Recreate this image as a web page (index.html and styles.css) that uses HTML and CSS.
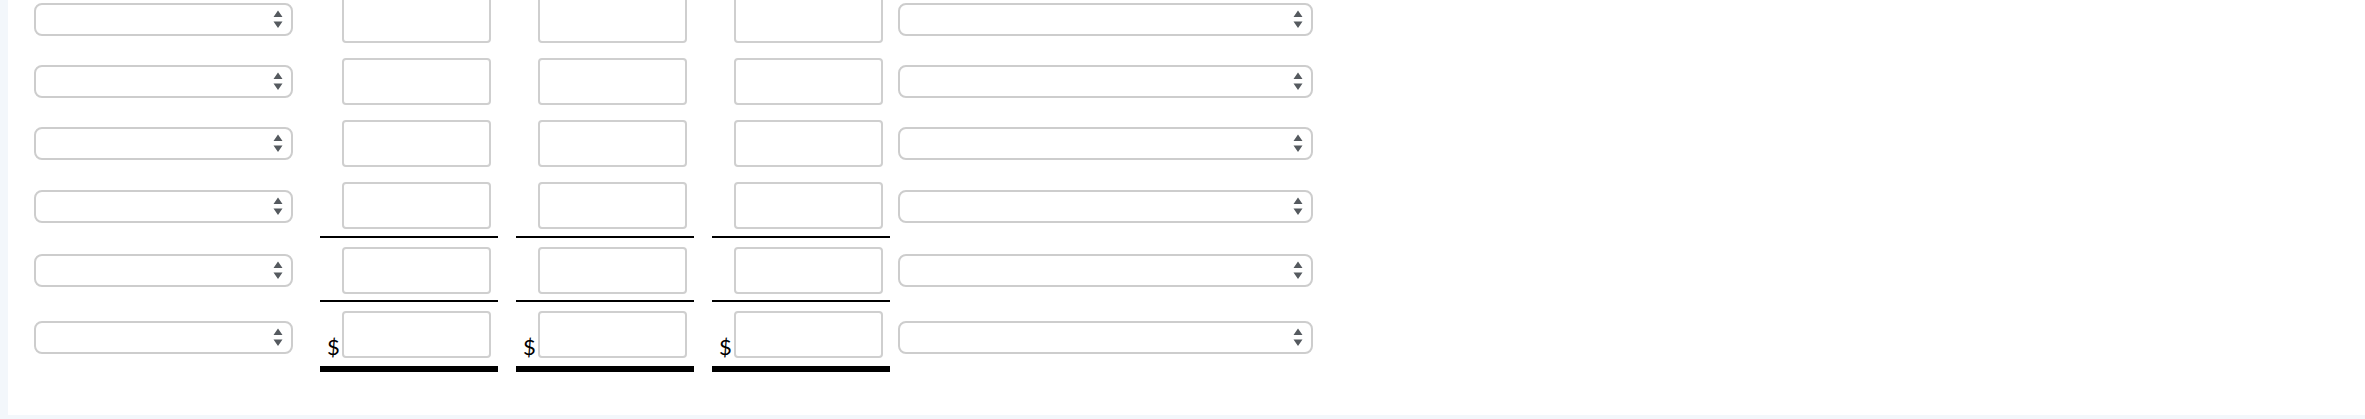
FILE: index.html
```html
<!DOCTYPE html>
<html lang="en">
<head>
<meta charset="utf-8">
<title>Worksheet</title>
<link rel="stylesheet" href="styles.css">
</head>
<body>
<div class="panel">
  <div class="row">
    <div class="sel sel-left"><select aria-label="Account"></select><svg class="arr" viewBox="0 0 10 19" width="10" height="19"><path d="M5 0.5L9.5 7H0.5Z M0.5 11.5H9.5L5 18Z"/></svg></div>
    <div class="amt"><span class="cur"></span><input type="text" class="tb"></div>
    <div class="amt"><span class="cur"></span><input type="text" class="tb"></div>
    <div class="amt"><span class="cur"></span><input type="text" class="tb"></div>
    <div class="sel sel-right"><select aria-label="Classification"></select><svg class="arr" viewBox="0 0 10 19" width="10" height="19"><path d="M5 0.5L9.5 7H0.5Z M0.5 11.5H9.5L5 18Z"/></svg></div>
  </div>
  <div class="row">
    <div class="sel sel-left"><select aria-label="Account"></select><svg class="arr" viewBox="0 0 10 19" width="10" height="19"><path d="M5 0.5L9.5 7H0.5Z M0.5 11.5H9.5L5 18Z"/></svg></div>
    <div class="amt"><span class="cur"></span><input type="text" class="tb"></div>
    <div class="amt"><span class="cur"></span><input type="text" class="tb"></div>
    <div class="amt"><span class="cur"></span><input type="text" class="tb"></div>
    <div class="sel sel-right"><select aria-label="Classification"></select><svg class="arr" viewBox="0 0 10 19" width="10" height="19"><path d="M5 0.5L9.5 7H0.5Z M0.5 11.5H9.5L5 18Z"/></svg></div>
  </div>
  <div class="row">
    <div class="sel sel-left"><select aria-label="Account"></select><svg class="arr" viewBox="0 0 10 19" width="10" height="19"><path d="M5 0.5L9.5 7H0.5Z M0.5 11.5H9.5L5 18Z"/></svg></div>
    <div class="amt"><span class="cur"></span><input type="text" class="tb"></div>
    <div class="amt"><span class="cur"></span><input type="text" class="tb"></div>
    <div class="amt"><span class="cur"></span><input type="text" class="tb"></div>
    <div class="sel sel-right"><select aria-label="Classification"></select><svg class="arr" viewBox="0 0 10 19" width="10" height="19"><path d="M5 0.5L9.5 7H0.5Z M0.5 11.5H9.5L5 18Z"/></svg></div>
  </div>
  <div class="row row-sub">
    <div class="sel sel-left"><select aria-label="Account"></select><svg class="arr" viewBox="0 0 10 19" width="10" height="19"><path d="M5 0.5L9.5 7H0.5Z M0.5 11.5H9.5L5 18Z"/></svg></div>
    <div class="amt"><span class="cur"></span><input type="text" class="tb"></div>
    <div class="amt"><span class="cur"></span><input type="text" class="tb"></div>
    <div class="amt"><span class="cur"></span><input type="text" class="tb"></div>
    <div class="sel sel-right"><select aria-label="Classification"></select><svg class="arr" viewBox="0 0 10 19" width="10" height="19"><path d="M5 0.5L9.5 7H0.5Z M0.5 11.5H9.5L5 18Z"/></svg></div>
  </div>
  <div class="row row-sub row-after">
    <div class="sel sel-left"><select aria-label="Account"></select><svg class="arr" viewBox="0 0 10 19" width="10" height="19"><path d="M5 0.5L9.5 7H0.5Z M0.5 11.5H9.5L5 18Z"/></svg></div>
    <div class="amt"><span class="cur"></span><input type="text" class="tb"></div>
    <div class="amt"><span class="cur"></span><input type="text" class="tb"></div>
    <div class="amt"><span class="cur"></span><input type="text" class="tb"></div>
    <div class="sel sel-right"><select aria-label="Classification"></select><svg class="arr" viewBox="0 0 10 19" width="10" height="19"><path d="M5 0.5L9.5 7H0.5Z M0.5 11.5H9.5L5 18Z"/></svg></div>
  </div>
  <div class="row row-total row-after">
    <div class="sel sel-left"><select aria-label="Account"></select><svg class="arr" viewBox="0 0 10 19" width="10" height="19"><path d="M5 0.5L9.5 7H0.5Z M0.5 11.5H9.5L5 18Z"/></svg></div>
    <div class="amt"><span class="cur">$</span><input type="text" class="tb"></div>
    <div class="amt"><span class="cur">$</span><input type="text" class="tb"></div>
    <div class="amt"><span class="cur">$</span><input type="text" class="tb"></div>
    <div class="sel sel-right"><select aria-label="Classification"></select><svg class="arr" viewBox="0 0 10 19" width="10" height="19"><path d="M5 0.5L9.5 7H0.5Z M0.5 11.5H9.5L5 18Z"/></svg></div>
  </div>
</div>
</body>
</html>
```

FILE: styles.css
```css
html {
  background: #f3f7fb;
}

body {
  margin: 0;
  overflow: hidden;
  font-family: Lato, "Liberation Sans", sans-serif;
  color: #000;
}

.panel {
  margin-top: -12px;
  margin-left: 8px;
  background: #fff;
  padding: 0 0 43px 26px;
}

.row {
  display: flex;
  align-items: stretch;
}

.sel {
  position: relative;
  align-self: center;
  height: 33px;
}

.sel select {
  appearance: none;
  -webkit-appearance: none;
  display: block;
  width: 100%;
  height: 100%;
  margin: 0;
  box-sizing: border-box;
  border: 2px solid #cdcdcd;
  border-radius: 8px;
  background: #fff;
}

.sel .arr {
  position: absolute;
  right: 10px;
  top: 7px;
  fill: #555a5f;
  pointer-events: none;
}

.sel-left {
  width: 259px;
  margin-right: 27px;
}

.sel-right {
  width: 415px;
  margin-left: 8px;
}

.amt {
  width: 178px;
  box-sizing: border-box;
  display: flex;
  align-items: flex-end;
  padding: 8px 7px 7px 7px;
}

.amt + .amt {
  margin-left: 18px;
}

.cur {
  width: 15px;
  flex: none;
  font-size: 22px;
  line-height: 22px;
}

.tb {
  width: 149px;
  height: 47px;
  margin: 0;
  box-sizing: border-box;
  border: 2px solid #cfcfcf;
  border-radius: 4px;
  background: #fff;
  flex: none;
}

.row-after .amt {
  padding-top: 9px;
}

.row-sub .amt {
  padding-bottom: 6px;
  border-bottom: 2px solid #000;
}

.row-sub:not(.row-after) .amt {
  padding-bottom: 7px;
}

.row-total .amt {
  padding-bottom: 8px;
  border-bottom: 6px solid #000;
}
```
